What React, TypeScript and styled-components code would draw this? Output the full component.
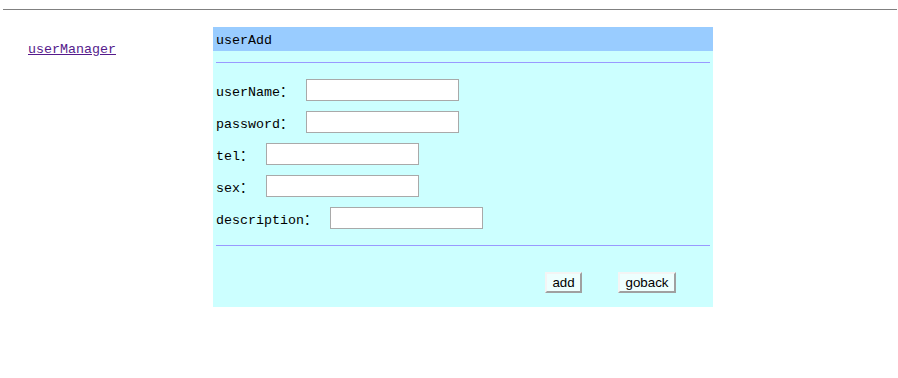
import styled, { createGlobalStyle } from 'styled-components';

const GlobalStyle = createGlobalStyle`
  body {
    margin: 0;
    background: #fff;
    font-family: "Liberation Mono", "DejaVu Sans Mono", monospace;
    font-size: 13.33px;
    color: #000;
  }
`;

const TopRule = styled.div`
  margin: 9px 1px 0 3px;
  height: 1px;
  background: #808080;
`;

const Layout = styled.div`
  display: flex;
  padding-top: 17px;
`;

const Sidebar = styled.div`
  width: 185px;
  padding: 15px 0 0 28px;
`;

const NavLink = styled.a`
  color: #551a8b;
  text-decoration: underline;
  line-height: 16px;
`;

const Panel = styled.div`
  width: 500px;
  height: 280px;
  background: #ccffff;
`;

const PanelHeader = styled.div`
  box-sizing: border-box;
  height: 24px;
  line-height: 24px;
  padding: 2px 0 0 3px;
  background: #99ccff;
`;

const PanelBody = styled.div`
  padding: 0 3px;
`;

const Divider = styled.div<{ $top: number }>`
  margin-top: ${(p) => p.$top}px;
  height: 1px;
  background: #9999ff;
`;

const FormRows = styled.div`
  display: flex;
  flex-direction: column;
  gap: 10px;
  padding-top: 16px;
`;

const Row = styled.div`
  display: flex;
  align-items: center;
  height: 22px;
`;

const Label = styled.label`
  white-space: nowrap;
  padding-top: 1px;
`;

const Colon = styled.span`
  display: inline-block;
  width: 16px;
  font-family: "Noto Sans CJK SC", sans-serif;
`;

const Field = styled.input`
  box-sizing: border-box;
  width: 153px;
  height: 22px;
  margin: 0 0 0 10px;
  border: 1px solid #a9a9a9;
  background: #fff;
  padding: 1px 2px;
  font-size: 13.33px;
`;

const Actions = styled.div`
  display: flex;
  justify-content: flex-end;
  gap: 36px;
  padding: 26px 34px 0 0;
`;

const Button = styled.button<{ $w: number }>`
  box-sizing: border-box;
  width: ${(p) => p.$w}px;
  height: 21px;
  padding: 0;
  border: 2px solid;
  border-color: #f4f4f4 #a0a0a0 #a0a0a0 #f4f4f4;
  background: #eefffe;
  font-family: "Liberation Sans", Arial, sans-serif;
  font-size: 13.33px;
  color: #000;
  line-height: 17px;
  cursor: pointer;
`;

const fields = ['userName', 'password', 'tel', 'sex', 'description'];

export default function App() {
  return (
    <>
      <GlobalStyle />
      <TopRule />
      <Layout>
        <Sidebar>
          <NavLink href="#">userManager</NavLink>
        </Sidebar>
        <Panel>
          <PanelHeader>userAdd</PanelHeader>
          <PanelBody>
            <Divider $top={11} />
            <FormRows>
              {fields.map((name) => (
                <Row key={name}>
                  <Label htmlFor={name}>
                    {name}
                    <Colon>：</Colon>
                  </Label>
                  <Field id={name} name={name} type={name === 'password' ? 'password' : 'text'} />
                </Row>
              ))}
            </FormRows>
            <Divider $top={16} />
            <Actions>
              <Button type="button" $w={37}>add</Button>
              <Button type="button" $w={58}>goback</Button>
            </Actions>
          </PanelBody>
        </Panel>
      </Layout>
    </>
  );
}
